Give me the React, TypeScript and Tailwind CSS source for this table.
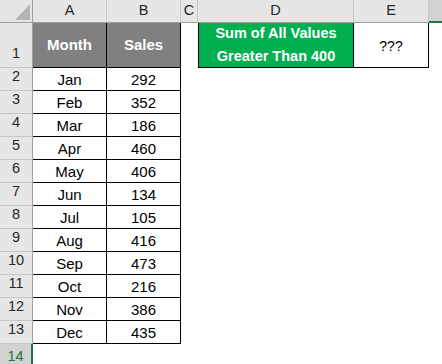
import React from "react";

const months = [
  ["Jan", 292], ["Feb", 352], ["Mar", 186], ["Apr", 460], ["May", 406], ["Jun", 134],
  ["Jul", 105], ["Aug", 416], ["Sep", 473], ["Oct", 216], ["Nov", 386], ["Dec", 435],
] as const;

const colHead = "flex items-center justify-center bg-[#e6e6e6] border-r border-b border-r-[#c6c6c6] border-b-[#9e9e9e] text-[14.5px] text-[#262626]";
const rowHead = "flex items-end justify-center pb-[2px] bg-[#e6e6e6] border-r border-b border-r-[#9e9e9e] border-b-[#c6c6c6] text-[14.5px] text-[#262626]";
const cell = "flex items-center justify-center pt-[2px] bg-white border-r border-b border-black text-[15px] text-black";

export default function App() {
  return (
    <div className="w-[442px] h-[364px] overflow-hidden bg-white font-['Liberation_Sans',Arial,sans-serif]">
      <div className="grid h-full grid-cols-[33px_74px_74px_17px_156px_75px_1fr] grid-rows-[23px_45px_repeat(12,23px)_1fr]">
        {/* column headers */}
        <div className="relative bg-[#e6e6e6] border-r border-b border-r-[#9e9e9e] border-b-[#9e9e9e]">
          <svg className="absolute left-[15px] top-[4px]" width="16" height="16" viewBox="0 0 16 16">
            <polygon points="15,0 15,16 0,16" fill="#b4b4b4" />
          </svg>
        </div>
        <div className={colHead}>A</div>
        <div className={colHead}>B</div>
        <div className={colHead}>C</div>
        <div className={colHead}>D</div>
        <div className={colHead}>E</div>
        <div className="bg-[#d2d2d2] border-b-2 border-[#217346]"></div>

        {/* row 1 */}
        <div className={rowHead}>1</div>
        <div className="flex items-center justify-center bg-[#808080] border-r border-b border-black text-[15px] font-bold text-white">Month</div>
        <div className="flex items-center justify-center bg-[#808080] border-r border-b border-black text-[15px] font-bold text-white">Sales</div>
        <div className="bg-white"></div>
        <div className="flex flex-col items-center justify-center bg-[#00b050] border-l border-r border-b border-black text-[14.5px] leading-[23px] font-bold text-white">
          <span>Sum of All Values</span>
          <span>Greater Than 400</span>
        </div>
        <div className="flex items-center justify-center pt-[2px] bg-white border-r border-b border-black text-[14px] text-black">???</div>
        <div className="bg-white"></div>

        {months.map(([m, v], i) => (
          <React.Fragment key={m}>
            <div className={rowHead}>{i + 2}</div>
            <div className={cell}>{m}</div>
            <div className={cell}>{v}</div>
            <div></div>
            <div></div>
            <div></div>
            <div></div>
          </React.Fragment>
        ))}

        {/* row 14 selected */}
        <div className="flex items-start justify-center pt-[2px] bg-[#d2d2d2] border-r-2 border-[#217346] text-[14.5px] text-[#217346]">14</div>
        <div></div>
        <div></div>
        <div></div>
        <div></div>
        <div></div>
        <div></div>
      </div>
    </div>
  );
}
